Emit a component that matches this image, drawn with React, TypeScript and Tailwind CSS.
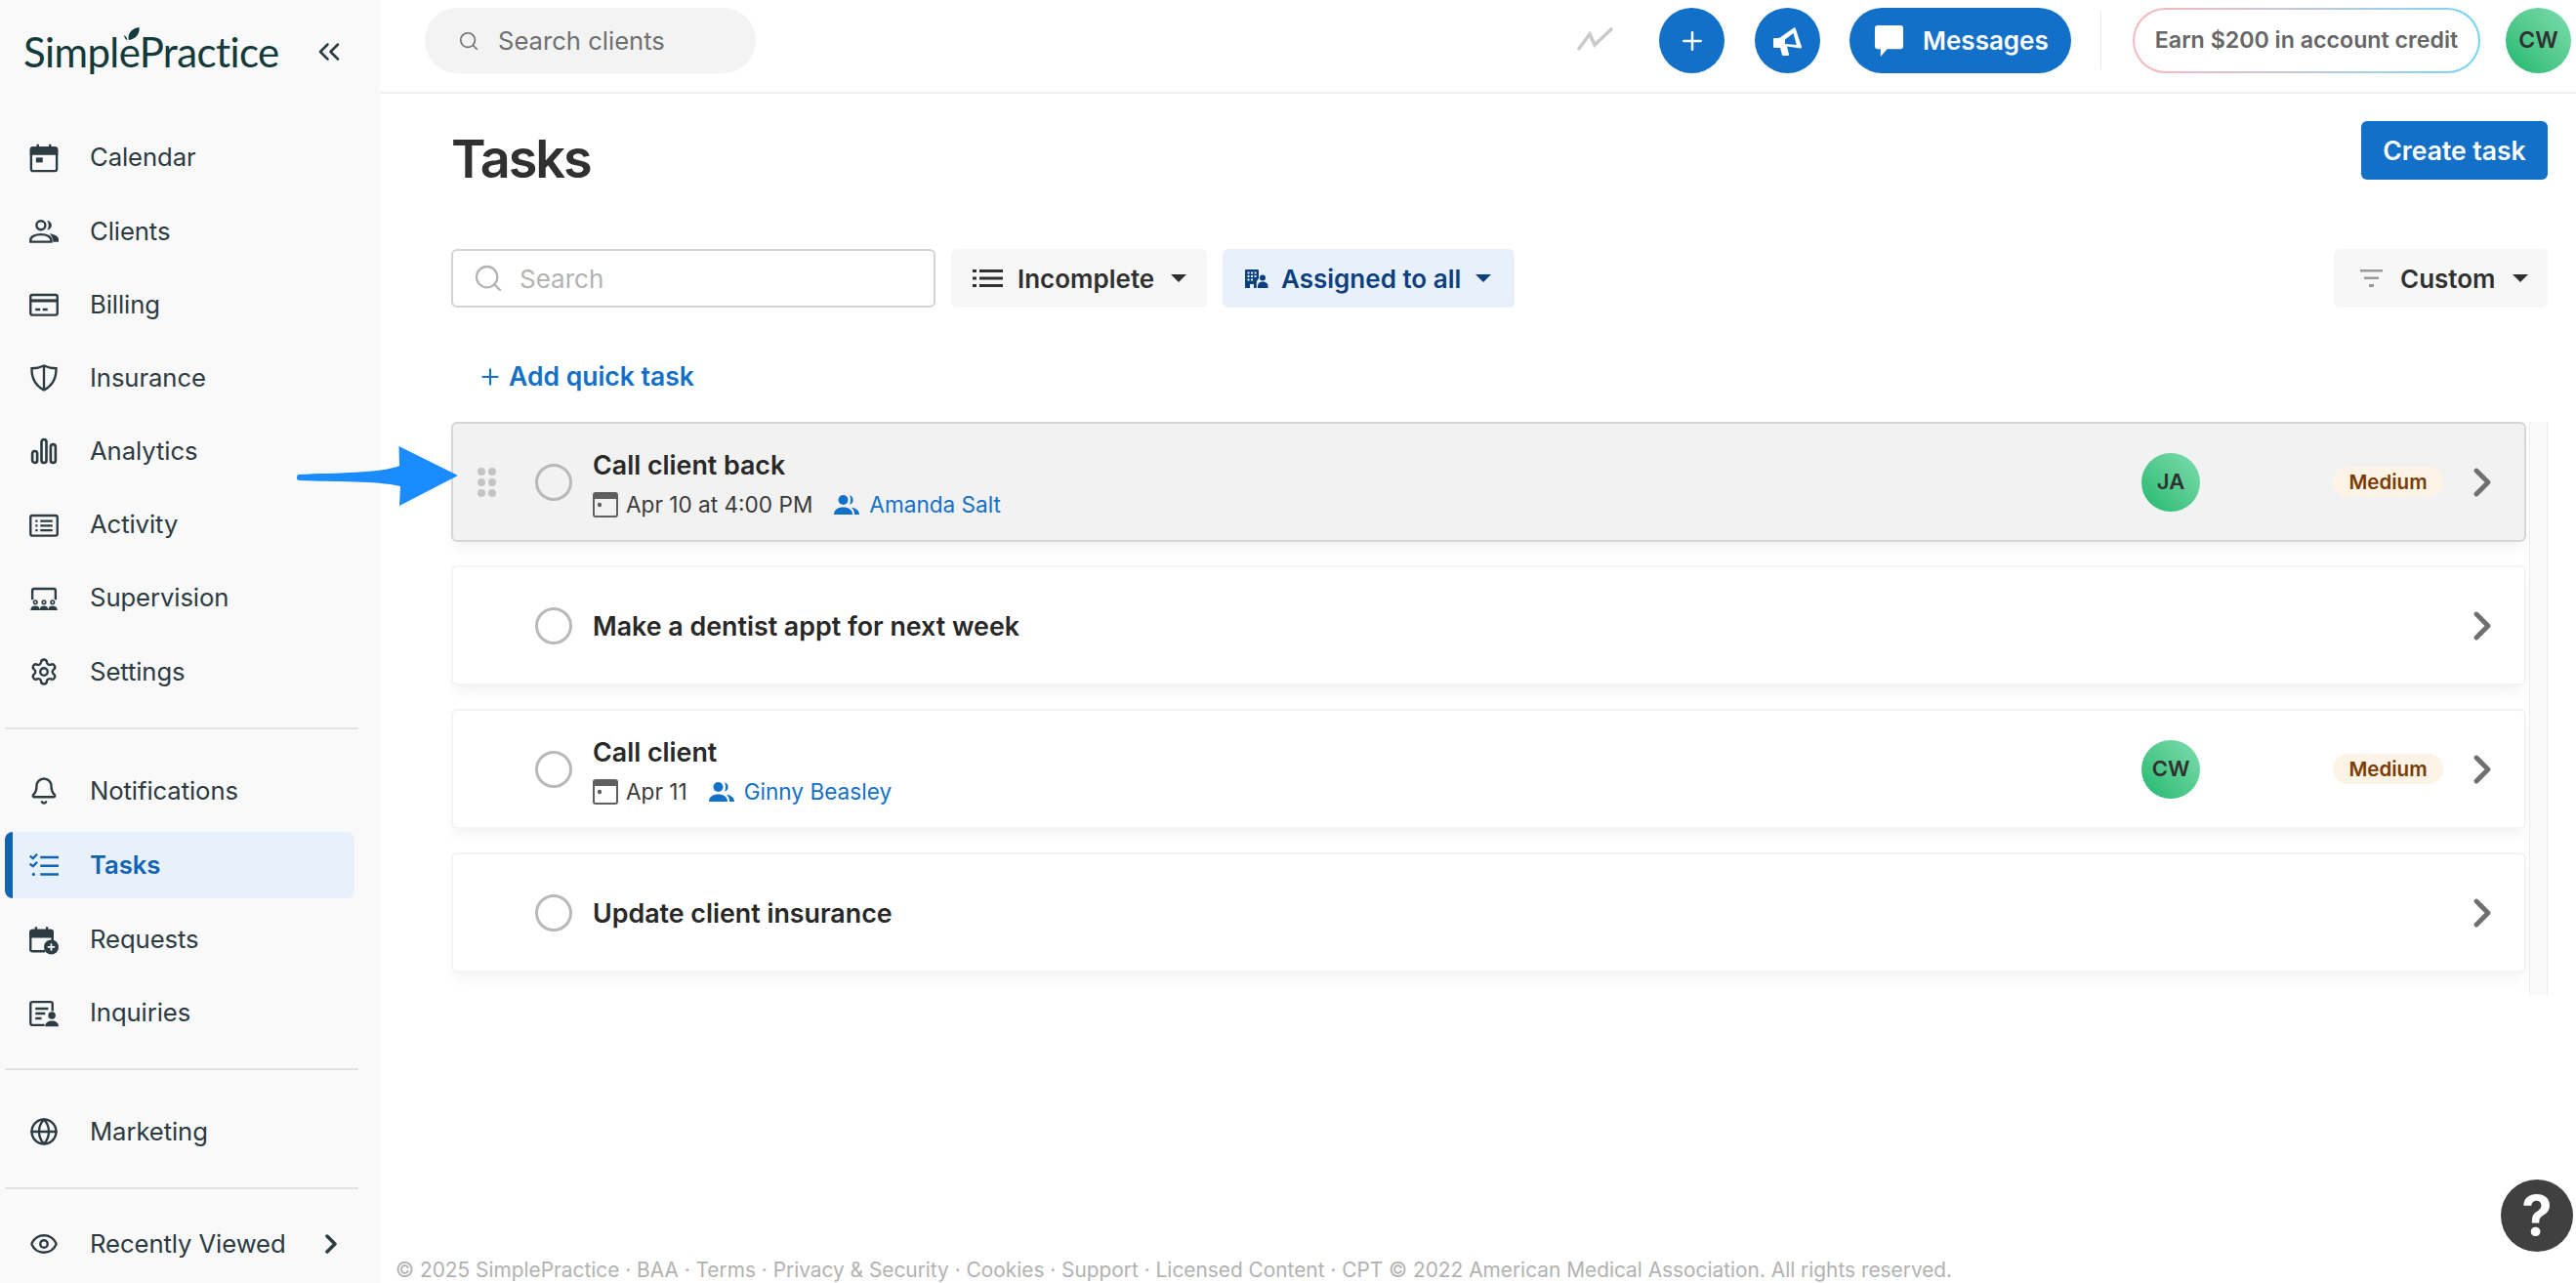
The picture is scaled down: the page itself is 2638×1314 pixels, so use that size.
import { ReactNode } from 'react'
import { ChevronRight, Eye, Globe, Settings, Bell, Search, Plus, ChevronsLeft } from 'lucide-react'

const font = { fontFamily: 'Inter, sans-serif' }

function Svg({ children, className = 'w-[30px] h-[30px]' }: { children: ReactNode; className?: string }) {
  return (
    <svg viewBox="0 0 24 24" fill="none" stroke="currentColor" strokeWidth="1.9" className={className}>
      {children}
    </svg>
  )
}

const CalendarIcon = () => (
  <Svg>
    <rect x="1.5" y="3.5" width="21" height="19" rx="1.5" />
    <path d="M1.5 8.500h21V5a1.500 1.500 0 0 0-1.500-1.500H3A1.500 1.500 0 0 0 1.500 5z" fill="currentColor" />
    <path d="M7 .5v3.500M17 .5v3.500" />
    <rect x="5.500" y="11.500" width="5.500" height="4" fill="currentColor" stroke="none" />
  </Svg>
)
const ClientsIcon = () => (
  <Svg>
    <circle cx="9.5" cy="7" r="3.6" />
    <path d="M1 20.500v-1.200c0-3 3.700-4.800 8.500-4.800s8.500 1.800 8.500 4.800v1.200z" />
    <path d="M14.500 3.200a3.800 3.800 0 0 1 0 7.600c1.800-1.800 1.800-5.700 0-7.600zM16.500 13.800c4 .4 7.500 2 7.500 4.800v1.900h-4.500c0-2.600-.9-4.800-3-6.700z" fill="currentColor" stroke="none" />
  </Svg>
)
const BillingIcon = () => (
  <Svg>
    <rect x="1" y="4" width="22" height="16.500" rx="1.500" />
    <path d="M1 7.500h22v2.500H1z" fill="currentColor" stroke="none" />
    <path d="M5 16h4M11 16h4" />
  </Svg>
)
const ShieldIcon = () => (
  <Svg>
    <path d="M12 2c3 1.500 6.500 2.200 10 2.200.2 8-2.800 14-10 17.800C4.800 18.200 1.800 12.200 2 4.200 5.500 4.200 9 3.500 12 2z" />
    <path d="M12 2v20" />
  </Svg>
)
const AnalyticsIcon = () => (
  <Svg>
    <rect x="2.500" y="12" width="4" height="9.500" rx="2" strokeWidth="2.100" />
    <rect x="10" y="2.500" width="4" height="19" rx="2" strokeWidth="2.100" />
    <rect x="17.500" y="6.500" width="4" height="15" rx="2" strokeWidth="2.100" />
  </Svg>
)
const ActivityIcon = () => (
  <Svg>
    <rect x="1" y="4" width="22" height="16.500" rx="1.500" />
    <path d="M9 8.500h10M9 12.200h10M9 16h10" strokeWidth="1.800" />
    <path d="M5 8.500h1.800M5 12.200h1.800M5 16h1.800" strokeWidth="1.800" />
  </Svg>
)
const SupervisionIcon = () => (
  <Svg>
    <path d="M2.500 13V5.500A1.500 1.500 0 0 1 4 4h16a1.500 1.500 0 0 1 1.500 1.500V13" />
    <circle cx="5" cy="15" r="1.400" strokeWidth="1.300" />
    <circle cx="12" cy="15" r="1.400" strokeWidth="1.300" />
    <circle cx="19" cy="15" r="1.400" strokeWidth="1.300" />
    <path d="M1 21.500c0-2.300 1.700-3.500 4-3.500s3.500 1 3.500 3.500zM8.500 21.500c0-2.300 1.300-3.500 3.500-3.500s3.500 1.200 3.500 3.500zM15.500 21.500c0-2.500 1.300-3.500 3.500-3.500s4 1.200 4 3.500z" fill="currentColor" stroke="none" />
  </Svg>
)
const TasksIcon = () => (
  <Svg>
    <path d="M9 5.500h15M9 12.500h15M9 19.500h15" strokeWidth="2" />
    <path d="M.5 4.500l2.500 2 3.500-3.500M.5 11l2.500 2 3.500-3.500" strokeWidth="1.800" />
    <circle cx="3.500" cy="19.500" r="1.300" fill="currentColor" stroke="none" />
  </Svg>
)
const RequestsIcon = () => (
  <Svg>
    <path d="M13 21H2.500A1.500 1.500 0 0 1 1 19.500V5.500A1.500 1.500 0 0 1 2.500 4h15A1.500 1.500 0 0 1 19 5.500V12" />
    <path d="M1 9h18V5.500A1.500 1.500 0 0 0 17.500 4h-15A1.500 1.500 0 0 0 1 5.500z" fill="currentColor" />
    <path d="M5.500 1v3M14.500 1v3" />
    <circle cx="18" cy="17.500" r="6" fill="currentColor" stroke="none" />
    <path d="M18 14.500v6M15 17.500h6" stroke="#f9f9f9" strokeWidth="1.400" />
  </Svg>
)
const InquiriesIcon = () => (
  <Svg>
    <path d="M12.500 21.500H2.500A1.500 1.500 0 0 1 1 20V4A1.500 1.500 0 0 1 2.500 2.500h15A1.500 1.500 0 0 1 19 4v6" strokeWidth="1.900" />
    <path d="M5 8h10.500M5 12h8M5 16h5" strokeWidth="1.900" />
    <circle cx="18.500" cy="13.500" r="3" fill="currentColor" stroke="none" />
    <path d="M13 22.500c0-3 2.500-4.500 5.500-4.500s5.500 1.500 5.500 4.500z" fill="currentColor" stroke="none" />
  </Svg>
)

function NavItem({ icon, label, active }: { icon: ReactNode; label: string; active?: boolean }) {
  if (active) {
    return (
      <div className="flex items-center h-[68px] mt-[8px] w-[358px] ml-[5px] pl-[17px] bg-[#e8f1fa] border-l-[8px] border-[#1164b4] rounded-[8px] text-[#1164b4] font-semibold">
        {icon}
        <span className="ml-[32px]">{label}</span>
      </div>
    )
  }
  return (
    <div className="flex items-center h-[68px] pl-[30px] text-[#2c3a42]">
      {icon}
      <span className="ml-[32px]">{label}</span>
    </div>
  )
}

function Divider({ className }: { className: string }) {
  return <div className={`h-[2px] w-[362px] ml-[5px] bg-[#e2e2e2] ${className}`} />
}

function Sidebar() {
  return (
    <aside className="w-[389px] shrink-0 h-full bg-[#f9f9f9] text-[25.700px] tracking-[-0.1px]">
      <div className="relative h-[124px] pl-[24px] pt-[25px]">
        <div className="relative flex items-center justify-between pr-[34px]">
          <span className="text-[42px] leading-[56px] tracking-[-0.6px] text-[#12393b]" style={{ fontFamily: 'Lato, sans-serif' }}>
            SimplePractice
          </span>
          <svg viewBox="0 0 16 14" className="absolute left-[103px] top-[3px] w-[16px] h-[14px] fill-[#12393b]">
            <path d="M5 13C3 8 7 1 15.500 0c1 6-3 12-10.500 13z" />
            <path d="M3.500 13.500C1.500 12.500.2 10.500 0 8c1.500.8 2.600 2 3 3.500z" />
          </svg>
          <ChevronsLeft className="w-[36px] h-[36px] text-[#2c3a42]" strokeWidth={1.700} />
        </div>
      </div>
      <div className="[&>div]:h-[75.200px]">
        <NavItem icon={<CalendarIcon />} label="Calendar" />
        <NavItem icon={<ClientsIcon />} label="Clients" />
        <NavItem icon={<BillingIcon />} label="Billing" />
        <NavItem icon={<ShieldIcon />} label="Insurance" />
        <NavItem icon={<AnalyticsIcon />} label="Analytics" />
        <NavItem icon={<ActivityIcon />} label="Activity" />
        <NavItem icon={<SupervisionIcon />} label="Supervision" />
        <NavItem icon={<Settings className="w-[30px] h-[30px]" strokeWidth={1.900} />} label="Settings" />
      </div>
      <Divider className="mt-[19px]" />
      <div className="mt-[29.500px]">
        <NavItem icon={<Bell className="w-[30px] h-[30px]" strokeWidth={1.900} />} label="Notifications" />
        <NavItem icon={<TasksIcon />} label="Tasks" active />
        <div className="mt-[8.500px]">
          <NavItem icon={<RequestsIcon />} label="Requests" />
        </div>
        <div className="mt-[7px]">
          <NavItem icon={<InquiriesIcon />} label="Inquiries" />
        </div>
      </div>
      <Divider className="mt-[22.500px]" />
      <div className="mt-[29px]">
        <NavItem icon={<Globe className="w-[30px] h-[30px]" strokeWidth={1.900} />} label="Marketing" />
      </div>
      <Divider className="mt-[23px]" />
      <div className="mt-[22px] flex items-center pr-[34px]">
        <div className="flex-1">
          <NavItem icon={<Eye className="w-[30px] h-[30px]" strokeWidth={1.900} />} label="Recently Viewed" />
        </div>
        <ChevronRight className="w-[32px] h-[32px] text-[#2c3a42]" strokeWidth={2.600} />
      </div>
    </aside>
  )
}

function Header() {
  return (
    <header className="h-[96px] shrink-0 border-b-2 border-[#f0f0f0] flex items-start pt-[8px] pl-[46px] pr-[5px]">
      <div className="w-[339px] h-[67px] rounded-full bg-[#f3f3f3] flex items-center pl-[34px] text-[25.600px] text-[#6f6f6f]">
        <Search className="w-[22px] h-[22px]" strokeWidth={1.800} />
        <span className="ml-[19px] pt-[1px]">Search clients</span>
      </div>
      <svg viewBox="0 0 38 24" className="w-[38px] h-[24px] mt-[20px] ml-auto" fill="none" stroke="#cacaca" strokeWidth="3.500">
        <path d="M1 23L13 7l5 11L36 1" />
      </svg>
      <div className="ml-[46px] w-[67px] h-[67px] rounded-full bg-[#1370c9] flex items-center justify-center text-white">
        <Plus className="w-[30px] h-[30px]" strokeWidth={2} />
      </div>
      <div className="ml-[31px] w-[67px] h-[67px] rounded-full bg-[#1370c9] flex items-center justify-center">
        <svg viewBox="0 0 30 30" className="w-[30px] h-[30px] fill-white" fillRule="evenodd">
          <path d="M0 13a1 1 0 0 1 1-1h5L21 1.500c.8-.5 1.500-.2 1.700.5l6.300 19c.2.8-.3 1.500-1 1.400L14 20.500l2 8c.2.8-.3 1.500-1 1.500h-5c-.5 0-.9-.3-1-.7L7 22H1a1 1 0 0 1-1-1zM12 13.500v4.500l11.800 1L20.500 7z" />
        </svg>
      </div>
      <div className="ml-[30px] w-[227px] h-[67px] rounded-full bg-[#1370c9] flex items-center pl-[25px] text-white text-[26px] font-semibold">
        <svg viewBox="0 0 32 34" className="w-[31px] h-[33px] fill-white">
          <path d="M4 1h24a3 3 0 0 1 3 3v19a3 3 0 0 1-3 3H14l-7 8v-8H4a3 3 0 0 1-3-3V4a3 3 0 0 1 3-3z" />
        </svg>
        <span className="ml-[19px]">Messages</span>
      </div>
      <div className="ml-[30px] w-[1px] h-[60px] mt-[3px] bg-[#e8e8e8]" />
      <div className="ml-[32px] w-[356px] h-[67px] rounded-full p-[2px] bg-gradient-to-r from-[#f9b6bd] to-[#6fd6f3]">
        <div className="h-full rounded-full bg-white flex items-center justify-center text-[23.200px] font-semibold text-[#666666]">
          Earn $200 in account credit
        </div>
      </div>
      <div className="ml-[26px] w-[67px] h-[67px] rounded-full bg-gradient-to-tr from-[#10b96f] to-[#7ddcae] flex items-center justify-center text-[23px] font-semibold text-[#303030]">
        CW
      </div>
    </header>
  )
}

function Caret() {
  return <span className="w-0 h-0 border-x-[8px] border-x-transparent border-t-[8px] border-t-current" />
}

function ListIcon() {
  return (
    <svg viewBox="0 0 31 20" className="w-[31px] h-[20px]" fill="#303030">
      <path d="M0 1h4v3H0zM7 1h24v3H7zM0 8.500h4v3H0zM7 8.500h24v3H7zM0 16h4v3H0zM7 16h24v3H7z" />
    </svg>
  )
}

function AssignedIcon() {
  return (
    <svg viewBox="0 0 24 19" className="w-[24px] h-[19px]" fill="#0c3f7f">
      <path d="M1 0h12a1 1 0 0 1 1 1v8.500c-1.500 1-2.200 2.500-2.200 4.500v5H9v-4H5v4H0V1a1 1 0 0 1 1-1z" />
      <path d="M2.500 2.500h2v2h-2zM6 2.500h2v2H6zM9.500 2.500h2v2h-2zM2.500 6h2v2h-2zM6 6h2v2H6zM9.500 6h2v2h-2zM2.500 9.500h2v2h-2zM6 9.500h2v2H6z" fill="#e8f1fa" />
      <circle cx="18" cy="8.500" r="3" />
      <path d="M13 19v-2c0-3 2-4.500 5-4.500s5.500 1.500 5.500 4.500v2z" />
    </svg>
  )
}

function FilterIcon() {
  return (
    <svg viewBox="0 0 23 20" className="w-[23px] h-[20px]" fill="#9a9a9a">
      <path d="M0 1h23v2.500H0zM4 8.500h15V11H4zM9 16h5v3H9z" />
    </svg>
  )
}

function Filters() {
  return (
    <div className="mt-[59px] flex items-stretch h-[60px] text-[26px] font-semibold">
      <div className="w-[496px] border-2 border-[#d4d4d4] rounded-[6px] bg-white flex items-center pl-[20px] font-normal text-[#b3b3b3]">
        <Search className="w-[32px] h-[32px]" strokeWidth={1.700} />
        <span className="ml-[16px]">Search</span>
      </div>
      <div className="ml-[16px] w-[262px] rounded-[6px] bg-[#f7f7f7] flex items-center pl-[22px] text-[#303030]">
        <ListIcon />
        <span className="ml-[15px]">Incomplete</span>
        <span className="ml-[17px] flex"><Caret /></span>
      </div>
      <div className="ml-[16px] w-[299px] rounded-[6px] bg-[#e8f1fa] flex items-center pl-[23px] text-[#0c3f7f]">
        <AssignedIcon />
        <span className="ml-[13px]">Assigned to all</span>
        <span className="ml-[15px] flex"><Caret /></span>
      </div>
      <div className="ml-auto w-[219px] rounded-[6px] bg-[#f7f7f7] flex items-center pl-[27px] text-[#303030]">
        <FilterIcon />
        <span className="ml-[18px]">Custom</span>
        <span className="ml-[17px] flex"><Caret /></span>
      </div>
    </div>
  )
}

function DateIcon() {
  return (
    <svg viewBox="0 0 26 26" className="w-[26px] h-[26px]">
      <rect x="1" y="1" width="24" height="24" rx="2" fill="none" stroke="#5f5f5f" strokeWidth="2" />
      <path d="M1 3a2 2 0 0 1 2-2h20a2 2 0 0 1 2 2v4H1z" fill="#5f5f5f" />
      <circle cx="7" cy="13" r="2.200" fill="#5f5f5f" />
    </svg>
  )
}

function PersonIcon() {
  return (
    <svg viewBox="0 0 26 22" className="w-[26px] h-[22px] fill-[#1370c9]">
      <circle cx="9.500" cy="6" r="5" />
      <path d="M0 21c0-5 4-7.500 9.500-7.500S19 16 19 21z" />
      <path d="M16 1.200a5 5 0 0 1 0 9.600c1.500-2.800 1.500-6.800 0-9.600zM18 13.800c4.500.6 8 2.800 8 7.200h-5c0-3-1-5.500-3-7.200z" />
    </svg>
  )
}

interface Task {
  title: string
  date?: string
  assignee?: string
  initials?: string
  priority?: string
  dragging?: boolean
}

const tasks: Task[] = [
  { title: 'Call client back', date: 'Apr 10 at 4:00 PM', assignee: 'Amanda Salt', initials: 'JA', priority: 'Medium', dragging: true },
  { title: 'Make a dentist appt for next week' },
  { title: 'Call client', date: 'Apr 11', assignee: 'Ginny Beasley', initials: 'CW', priority: 'Medium' },
  { title: 'Update client insurance' },
]

function TaskCard({ task }: { task: Task }) {
  return (
    <div
      className={`h-[123px] shrink-0 flex items-center rounded-[6px] shadow-[0_10px_14px_-4px_rgba(0,0,0,0.05)] ${
        task.dragging ? 'border-2 border-[#d6d6d6] bg-[#f2f2f2]' : 'border-2 border-[#f4f4f4] bg-white'
      }`}
    >
      <div className="w-[84px] shrink-0 pl-[25px]">
        {task.dragging && (
          <div className="grid grid-cols-2 gap-x-[3px] gap-y-[3px] w-[19px]">
            {[0, 1, 2, 3, 4, 5].map((i) => (
              <span key={i} className="w-[8px] h-[8px] rounded-full bg-[#c4c4c4]" />
            ))}
          </div>
        )}
      </div>
      <span className="w-[38px] h-[38px] shrink-0 rounded-full border-[3.500px] border-[#b9b9b9]" />
      <div className={task.date ? 'ml-[21px] pt-[3px]' : 'ml-[21px]'}>
        <div className="text-[26.800px] leading-[34px] font-semibold text-[#282828]">{task.title}</div>
        {task.date && (
          <div className="mt-[10px] flex items-center text-[22.600px] leading-[28px] text-[#3a3a3a]">
            <DateIcon />
            <span className="ml-[8px]">{task.date}</span>
            <span className="ml-[22px]"><PersonIcon /></span>
            <span className="ml-[10px] text-[#1370c9]">{task.assignee}</span>
          </div>
        )}
      </div>
      <div className="ml-auto flex items-center pr-[19px]">
        {task.initials && (
          <>
            <span className="w-[60px] h-[60px] rounded-full bg-gradient-to-tr from-[#10b96f] to-[#7ddcae] flex items-center justify-center text-[22px] font-semibold text-[#303030]">
              {task.initials}
            </span>
            <span className="ml-[136px] w-[113px] h-[31px] pt-[1px] rounded-full bg-[#fdf3e6] flex items-center justify-center text-[20.500px] font-semibold text-[#7a3b00]">
              {task.priority}
            </span>
          </>
        )}
        <ChevronRight className="ml-[16px] w-[48px] h-[48px] text-[#6f6f6f]" strokeWidth={2.400} />
      </div>
    </div>
  )
}

export default function App() {
  return (
    <div className="relative w-[2638px] h-[1314px] flex overflow-hidden bg-white" style={font}>
      <Sidebar />
      <main className="flex-1 min-w-0 flex flex-col">
        <Header />
        <div className="flex-1 pl-[73px] pr-[29px]">
          <div className="mt-[28px] flex items-start justify-between">
            <h1 className="mt-[6px] text-[54px] leading-[66px] font-semibold tracking-[-2px] text-[#303030]">Tasks</h1>
            <div className="w-[191px] h-[60px] pt-[1px] rounded-[6px] bg-[#1370c9] flex items-center justify-center text-[26.500px] font-semibold text-white">
              Create task
            </div>
          </div>
          <Filters />
          <div className="mt-[51px] h-[40px] pl-[27px] flex items-center text-[#1370c9] text-[26.500px] font-semibold">
            <Plus className="w-[26px] h-[26px]" strokeWidth={2} />
            <span className="ml-[6px]">Add quick task</span>
          </div>
          <div className="mt-[26px] flex h-[587px]">
            <div className="flex-1 flex flex-col gap-[24px]">
              {tasks.map((t) => (
                <TaskCard key={t.title} task={t} />
              ))}
            </div>
            <div className="ml-[3px] w-[19px] bg-[#fafafa] border-x border-[#ececec]" />
          </div>
        </div>
        <footer className="pl-[16px] h-[26px] text-[20.850px] leading-[26px] text-[#b2b2b2]">
          © 2025 SimplePractice · BAA · Terms · Privacy &amp; Security · Cookies · Support · Licensed Content · CPT © 2022 American Medical Association. All rights reserved.
        </footer>
      </main>
      <svg viewBox="0 0 165 61" className="absolute left-[304px] top-[457px] w-[165px] h-[61px]">
        <path d="M2 29C40 27 85 28 105 20L104.500 0L165 30L105 61L106 41C80 35 40 37 2 35C-1 34-1 30 2 29z" fill="#1a8cff" />
      </svg>
      <div className="absolute left-[2561px] top-[1208px] w-[74px] h-[74px] rounded-full bg-[#404040] flex items-center justify-center text-[56px] font-bold text-white">
        ?
      </div>
    </div>
  )
}
